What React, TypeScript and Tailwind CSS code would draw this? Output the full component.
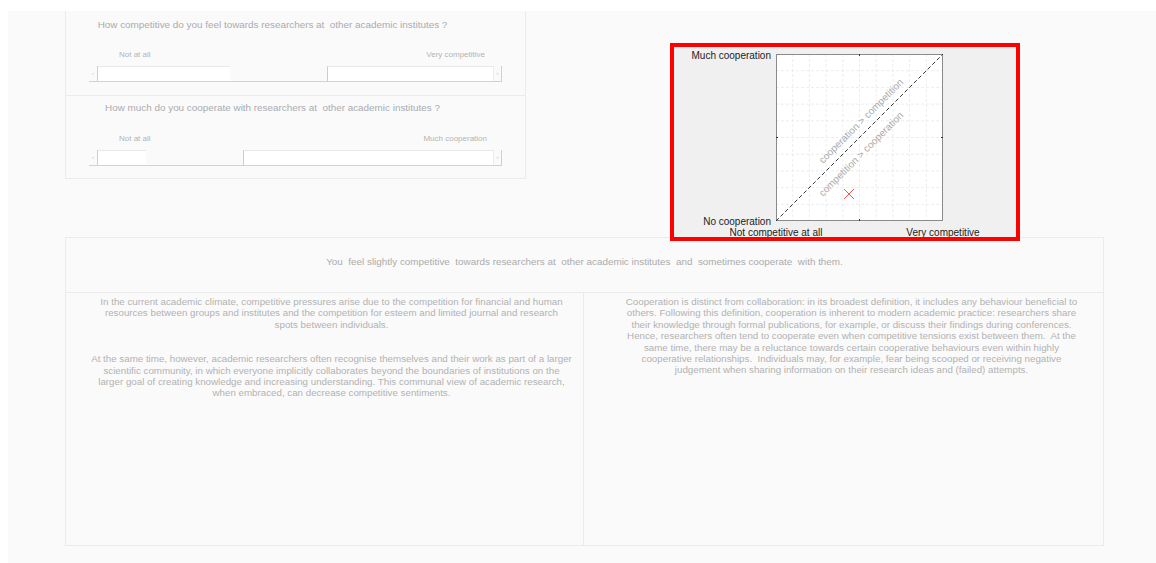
import React from 'react';

type SliderProps = {
  left: string;
  right: string;
  thumbLeft: string;
  labelPad: string;
};

// Flat scrollbar-style slider: arrow buttons, trough and a recessed thumb
const Slider: React.FC<SliderProps> = ({ left, right, thumbLeft, labelPad }) => (
  <div className="ml-[23px] w-[413px]">
    <div className={`flex justify-between pl-[30px] ${labelPad} text-[8px] leading-[10px] text-[#b4b4b4]`}>
      <span>{left}</span>
      <span>{right}</span>
    </div>
    <div className="mt-[6px] flex h-[16px] border-b border-[#d2d2d2]">
      <div className="flex w-[9px] items-center justify-center border-r border-[#cfcfcf] text-[6px] text-[#c4c4c4]">‹</div>
      <div className={`${thumbLeft} border-t border-[#e8e8e8] bg-white`} />
      <div className="w-[97px] bg-[#fafafa]" />
      <div className="flex-1 border-t border-l border-t-[#e8e8e8] border-l-[#cdcdcd] bg-white" />
      <div className="flex w-[9px] items-center justify-center border-l border-r border-l-[#ececec] border-r-[#cfcfcf] text-[6px] text-[#c4c4c4]">›</div>
    </div>
  </div>
);

const Chart: React.FC = () => {
  const x0 = 102;
  const y0 = 7;
  const size = 167;
  const step = size / 10;
  const grid = Array.from({ length: 9 }, (_, i) => (i + 1) * step);

  return (
    <svg width="342" height="190" className="block">
      <rect x={x0} y={y0} width={size} height={size} fill="#ffffff" />
      {grid.map((g) => (
        <g key={g} stroke="#e9e9e9" strokeWidth="0.8" strokeDasharray="3 2">
          <line x1={x0 + g} y1={y0} x2={x0 + g} y2={y0 + size} />
          <line x1={x0} y1={y0 + g} x2={x0 + size} y2={y0 + g} />
        </g>
      ))}
      <rect x={x0 + 0.5} y={y0 + 0.5} width={size - 1} height={size - 1} fill="none" stroke="#8a8a8a" strokeWidth="1" />
      {/* mid ticks */}
      <g stroke="#333" strokeWidth="1">
        <line x1={x0 + size / 2} y1={y0 + size} x2={x0 + size / 2} y2={y0 + size - 2} />
        <line x1={x0 + size / 2} y1={y0} x2={x0 + size / 2} y2={y0 + 2} />
        <line x1={x0} y1={y0 + size / 2} x2={x0 + 2} y2={y0 + size / 2} />
        <line x1={x0 + size} y1={y0 + size / 2} x2={x0 + size - 2} y2={y0 + size / 2} />
      </g>
      <line x1={x0} y1={y0 + size} x2={x0 + size} y2={y0} stroke="#333" strokeWidth="1" strokeDasharray="4 2.5" />
      <g fontSize="10" fill="#ababab" textAnchor="middle" dominantBaseline="central">
        <text x="187" y="74" transform="rotate(-45 187 74)">cooperation &gt; competition</text>
        <text x="187" y="107" transform="rotate(-45 187 107)">competition &gt; cooperation</text>
      </g>
      <g stroke="#ff5050" strokeWidth="1">
        <line x1="170" y1="142" x2="180" y2="152" />
        <line x1="180" y1="142" x2="170" y2="152" />
      </g>
      <g fontSize="10" fill="#222">
        <text x="97" y="11.5" textAnchor="end">Much cooperation</text>
        <text x="97" y="178" textAnchor="end">No cooperation</text>
        <text x={x0} y="188.5" textAnchor="middle">Not competitive at all</text>
        <text x={x0 + size} y="188.5" textAnchor="middle">Very competitive</text>
      </g>
    </svg>
  );
};

export default function App() {
  return (
    <div className="min-h-[563px] bg-white pl-2 pt-[11px] font-['Liberation_Sans',Arial,sans-serif]">
      <div className="h-[552px] bg-[#fafafa]">
        <div className="flex h-[226px] items-start">
          <div className="ml-[57px] flex h-[168px] w-[461px] flex-col border-x border-b border-[#ebebeb]">
            <div className="h-[85px] border-b border-[#ececec] pt-[7px]">
              <p className="w-[413px] whitespace-pre text-center text-[9.9px] leading-[13px] text-[#a9abb0]">
                How competitive do you feel towards researchers at  other academic institutes ?
              </p>
              <div className="mt-[19px]">
                <Slider left="Not at all" right="Very competitive" thumbLeft="w-[132px]" labelPad="pr-[17px]" />
              </div>
            </div>
            <div className="flex-1 pt-[5px]">
              <p className="w-[413px] whitespace-pre text-center text-[9.9px] leading-[13px] text-[#a9abb0]">
                How much do you cooperate with researchers at  other academic institutes ?
              </p>
              <div className="mt-[20px]">
                <Slider left="Not at all" right="Much cooperation" thumbLeft="w-[48px]" labelPad="pr-[15px]" />
              </div>
            </div>
          </div>
          <div className="relative z-10 ml-[144px] mt-[32px] border-4 border-[#ff0000] bg-[#f0f0f0]">
            <Chart />
          </div>
        </div>

        <div className="ml-[57px] flex h-[309px] w-[1039px] flex-col border border-[#ebebeb]">
          <div className="h-[55px] border-b border-[#ebebeb] pt-[18px]">
            <p className="whitespace-pre text-center text-[9.9px] leading-[12px] text-[#ababab]">
              You  feel slightly competitive  towards researchers at  other academic institutes  and  sometimes cooperate  with them.
            </p>
          </div>
          <div className="flex flex-1 text-center text-[9.75px] leading-[11.4px] text-[#b2b2b2]">
            <div className="w-[518px] border-r border-[#ebebeb] pl-[24px] pr-[10px] pt-[3px]">
              <p className="whitespace-pre-wrap">
                In the current academic climate, competitive pressures arise due to the competition for financial and human resources between groups and institutes and the competition for esteem and limited journal and research
                <br />
                spots between individuals.
              </p>
              <p className="mt-[23px] whitespace-pre-wrap">
                At the same time, however, academic researchers often recognise themselves and their work as part of a larger scientific community, in which everyone implicitly collaborates beyond the boundaries of institutions on the larger goal of creating knowledge and increasing understanding. This communal view of academic research, when embraced, can decrease competitive sentiments.
              </p>
            </div>
            <div className="flex-1 pl-[38px] pr-[22px] pt-[3px]">
              <p className="whitespace-pre-wrap">
                Cooperation is distinct from collaboration: in its broadest definition, it includes any behaviour beneficial to others. Following this definition, cooperation is inherent to modern academic practice: researchers share their knowledge through formal publications, for example, or discuss their findings during conferences. Hence, researchers often tend to cooperate even when competitive tensions exist between them.  At the same time, there may be a reluctance towards certain cooperative behaviours even within highly cooperative relationships.  Individuals may, for example, fear being scooped or receiving negative judgement when sharing information on their research ideas and (failed) attempts.
              </p>
            </div>
          </div>
        </div>
      </div>
    </div>
  );
}
